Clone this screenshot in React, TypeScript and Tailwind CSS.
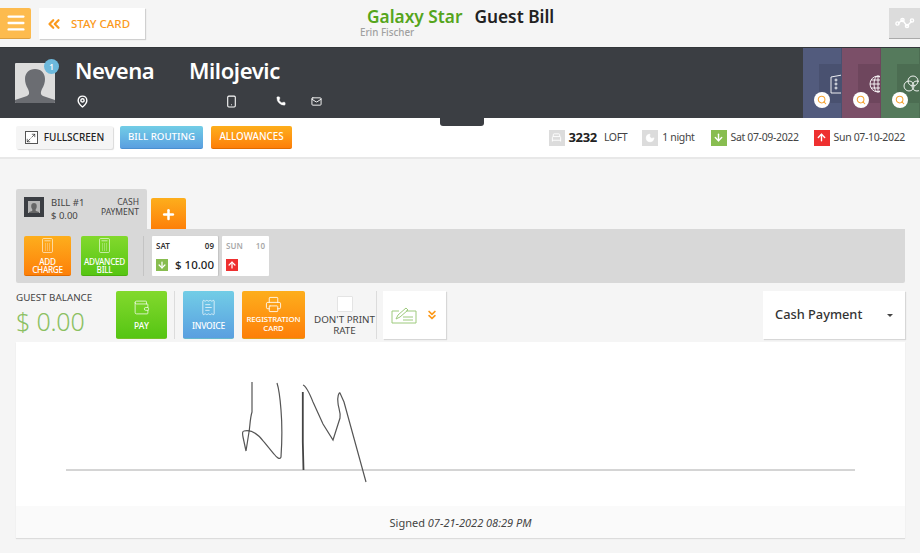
import React from "react";
import { Menu, ChevronsLeft, ChevronsDown, Search, MapPin, Smartphone, Phone, Mail, Plus, ArrowDown, ArrowUp, Moon, BedSingle, Wallet, ReceiptText, Printer, Maximize2 } from "lucide-react";

const font = { fontFamily: '"Noto Sans", sans-serif' };

function Calc() {
  return (
    <svg width="11" height="15" viewBox="0 0 11 15" fill="none" stroke="white" strokeOpacity="0.65" strokeWidth="0.9" className="mb-[5px]">
      <rect x="0.5" y="0.5" width="10" height="14" rx="1.2" />
      <path d="M2.500 2.800h6" />
      <path d="M3 6h1M5 6h1M7 6h1M3 8h1M5 8h1M7 8h1M3 10h1M5 10h1M7 10h1M3 12h1M5 12h1M7 12h1" />
    </svg>
  );
}

function Tile({ bg, border, children }: { bg: string; border?: string; children: React.ReactNode }) {
  return <div className={`flex w-[47px] h-[40px] flex-col items-center justify-end rounded-[2px] text-white text-[8.2px] leading-[7.5px] tracking-[-0.3px] font-medium text-center pb-[2px] border-b ${bg} ${border ?? ""}`}>{children}</div>;
}

function Action({ w, bg, children }: { w: string; bg: string; children: React.ReactNode }) {
  return <div className={`flex ${w} h-[48px] flex-col items-center justify-center gap-[2px] rounded-[2px] text-white text-[8.5px] leading-[9px] font-medium text-center border-b border-black/10 ${bg}`}>{children}</div>;
}

function Side({ bg, pl, children }: { bg: string; pl: string; children: React.ReactNode }) {
  return (
    <div className={`relative w-[39px] shrink-0 overflow-hidden border-r border-black/10 ${bg}`}>
      <div className={`absolute left-[16px] top-[16px] w-[40px] h-[39px] bg-black/10 flex items-center ${pl}`}>{children}</div>
      <div className="absolute left-[11px] top-[44px] w-[16px] h-[16px] rounded-full bg-white flex items-center justify-center">
        <Search size={10} strokeWidth={2.5} className="text-[#f6a332]" />
      </div>
    </div>
  );
}

function Stat({ bg, children }: { bg: string; children: React.ReactNode }) {
  return <span className={`flex w-[16px] h-[16px] items-center justify-center text-white ${bg}`}>{children}</span>;
}

export default function App() {
  return (
    <div style={font} className="w-[920px] h-[553px] overflow-hidden bg-[#f5f5f5] text-[#333] flex flex-col">
      <header className="relative h-[47px] shrink-0 flex items-start pt-[8px]">
        <button className="flex w-[31px] h-[31px] items-center justify-center rounded-r-[2px] bg-[#fdbb4e] border-b border-[#dda040] text-white">
          <Menu size={22} strokeWidth={2.6} />
        </button>
        <div className="ml-[8px] flex w-[106px] h-[31px] items-center gap-[8px] bg-white pl-[6px] shadow-[1px_1px_1px_rgba(0,0,0,0.15)] text-[#fb9a1c] text-[11.5px] font-medium">
          <ChevronsLeft size={18} strokeWidth={3} />
          <span>STAY CARD</span>
        </div>
        <div className="absolute left-[360px] top-[6px] w-[220px]">
          <div className="flex pl-[7px] text-[17.300px] leading-[22px] font-semibold">
            <span className="text-[#55a51c]">Galaxy Star</span>
            <span className="ml-[12px] text-[#222]">Guest Bill</span>
          </div>
          <div className="text-[9.8px] leading-[10px] font-medium text-[#a0a0a0]">Erin Fischer</div>
        </div>
        <div className="ml-auto flex w-[31px] h-[31px] items-center justify-center bg-[#dcdcdc] border-b border-[#aaa] text-white">
          <svg width="20" height="12" viewBox="0 0 20 12" fill="none" stroke="currentColor" strokeWidth="1.4">
            <path d="M3 6.500 7.500 3 12 9 17 4" />
            <circle cx="2.500" cy="6.500" r="1.600" /><circle cx="7.500" cy="3" r="1.600" /><circle cx="12" cy="9" r="1.600" /><circle cx="17" cy="3.500" r="1.600" />
          </svg>
        </div>
      </header>

      <section className="relative h-[71px] shrink-0 flex bg-[#3b3e43] text-white border-t border-[#33363a]">
        <div className="relative ml-[15px] mt-[15px] w-[40px] h-[40px] bg-[#dcdcdc] overflow-hidden rounded-[1px] flex items-end justify-center">
          <svg width="40" height="36" viewBox="0 0 40 36" fill="#6b6d72">
            <path d="M0 36v-3l12-4c2-1 3-3 1-7-2-3-3-7-3-10 0-6 4-10 10-10s10 4 10 10c0 3-1 7-3 10-2 4-1 6 1 7l12 4v3z" />
          </svg>
        </div>
        <span className="absolute left-[44px] top-[11px] flex w-[15px] h-[15px] items-center justify-center rounded-full bg-[#6db9dc] text-[8px] font-semibold">1</span>
        <div className="ml-[20px] flex-1">
          <div className="flex mt-[7px] text-[22px] leading-[30px] font-semibold tracking-[-0.4px]">
            <span className="w-[114px]">Nevena</span>
            <span>Milojevic</span>
          </div>
          <div className="relative mt-[9px] flex items-center h-[14px] text-white">
            <MapPin size={13} strokeWidth={2.6} className="ml-[1px]" />
            <Smartphone size={13} strokeWidth={2} className="ml-[136px]" />
            <Phone size={10} fill="currentColor" strokeWidth={1} className="ml-[38px]" />
            <Mail size={11} strokeWidth={2} className="ml-[25px]" />
          </div>
        </div>
        <div className="flex">
          <Side bg="bg-[#525b7d]" pl="pl-[11px]">
            <svg width="13" height="20" viewBox="0 0 13 20" fill="none" stroke="white" strokeWidth="0.9" className="shrink-0"><path d="M1 3l11-2v18H1z" /><circle cx="6" cy="6" r="1" /><circle cx="6" cy="10" r="1" /><circle cx="6" cy="14" r="1" /></svg>
          </Side>
          <Side bg="bg-[#7b4f68]" pl="pl-[11px]">
            <svg width="18" height="18" viewBox="0 0 18 18" fill="none" stroke="white" strokeWidth="0.9" className="shrink-0"><circle cx="9" cy="9" r="8" /><ellipse cx="9" cy="9" rx="4" ry="8" /><path d="M1 9h16M2 5h14M2 13h14M9 1v16" /></svg>
          </Side>
          <Side bg="bg-[#557a5c]" pl="pl-[6px]">
            <svg width="20" height="18" viewBox="0 0 20 18" fill="none" stroke="white" strokeWidth="0.9" className="shrink-0"><circle cx="10" cy="6" r="5" /><circle cx="6" cy="11" r="5" /><circle cx="14" cy="11" r="5" /></svg>
          </Side>
        </div>
        <div className="absolute left-[440px] top-[70px] w-[44px] h-[8px] bg-[#3b3e43] rounded-b-[3px] z-10" />
      </section>

      <section className="h-[41px] shrink-0 flex items-center bg-white border-b-2 border-[#e8e8e8] pl-[16px] pr-[15px]">
        <div className="flex w-[97px] h-[23px] items-center justify-center gap-[6px] bg-[#f5f5f5] rounded-[2px] shadow-[1px_1px_1px_rgba(0,0,0,0.15)] text-[#222] text-[10px] font-medium">
          <span className="flex w-[13px] h-[13px] items-center justify-center border border-[#555] bg-white"><Maximize2 size={10} strokeWidth={1.6} /></span>
          FULLSCREEN
        </div>
        <div className="ml-[7px] flex w-[83px] h-[23px] items-center justify-center rounded-[2px] bg-gradient-to-b from-[#72cde6] to-[#5a9fe0] border-b border-[#4a8fd0] pt-[1px] text-white text-[9.700px] font-medium">BILL ROUTING</div>
        <div className="ml-[8px] flex w-[81px] h-[23px] items-center justify-center rounded-[2px] bg-gradient-to-b from-[#fdae1c] to-[#fd7f08] border-b border-[#e06c00] pt-[1px] text-white text-[9.800px] font-medium">ALLOWANCES</div>
        <div className="ml-auto flex items-center text-[10.5px] tracking-[-0.35px] text-[#444]">
          <Stat bg="bg-[#dcdcdc]"><BedSingle size={11} /></Stat>
          <span className="ml-[4px] text-[13px] font-bold text-[#222]">3232</span>
          <span className="ml-[7px]">LOFT</span>
          <span className="ml-[15px]"><Stat bg="bg-[#dcdcdc]"><Moon size={10} fill="currentColor" /></Stat></span>
          <span className="ml-[4px]">1 night</span>
          <span className="ml-[16px]"><Stat bg="bg-[#88bd50]"><ArrowDown size={11} strokeWidth={3} /></Stat></span>
          <span className="ml-[4px]">Sat 07-09-2022</span>
          <span className="ml-[15px]"><Stat bg="bg-[#ee3030]"><ArrowUp size={11} strokeWidth={3} /></Stat></span>
          <span className="ml-[4px]">Sun 07-10-2022</span>
        </div>
      </section>

      <main className="flex-1 px-[16px] pr-[15px] pt-[30px]">
        <div className="flex items-end h-[40px]">
          <div className="flex w-[131px] h-[40px] bg-[#d8d8d8] rounded-t-[2px] pt-[8px] pl-[8px] text-[9.5px] leading-[12.500px] text-[#444]">
            <span className="flex w-[20px] h-[20px] items-center justify-center bg-[#3b3e43]">
              <svg width="12" height="12" viewBox="0 0 12 12" fill="#666"><rect width="12" height="12" fill="#b5b5b5" /><path d="M1 12v-1l3-1c1-1 0-2-.5-3C3 5 3 2 6 2s3 3 2.500 5c-.5 1-1.500 2-.5 3l3 1v1z" /></svg>
            </span>
            <div className="ml-[7px] w-[46px]"><div>BILL #1</div><div>$ 0.00</div></div>
            <div className="w-[42px] text-right leading-[10px] text-[8.500px]">CASH<br />PAYMENT</div>
          </div>
          <div className="ml-[4px] flex w-[35px] h-[31px] items-center justify-center rounded-t-[2px] bg-gradient-to-b from-[#fdae1c] to-[#fd7f08] pt-[2px] text-white">
            <Plus size={15} strokeWidth={4} />
          </div>
        </div>

        <div className="flex h-[54px] items-start bg-[#d8d8d8] pt-[7px] pl-[8px] rounded-b-[2px]">
          <Tile bg="bg-gradient-to-b from-[#fdae1c] to-[#fd7f08]" border="border-[#e06c00]">
            <Calc />
            ADD<br />CHARGE
          </Tile>
          <div className="ml-[10px]">
            <Tile bg="bg-gradient-to-b from-[#82d92c] to-[#55c512]" border="border-[#4bae0e]">
              <Calc />
              ADVANCED<br />BILL
            </Tile>
          </div>
          <div className="ml-[15px] w-px h-[40px] bg-[#c4c4c4]" />
          <div className="ml-[8px] w-[66px] h-[40px] bg-white rounded-[1px] px-[4px] pt-[5px] shadow-[1px_0_1px_rgba(0,0,0,0.1)]">
            <div className="flex justify-between text-[8px] leading-[10px] font-semibold text-[#333]"><span>SAT</span><span>09</span></div>
            <div className="mt-[8px] flex items-center justify-between text-[11.5px] leading-[12px] font-medium text-[#222]">
              <Stat bg="bg-[#88bd50] !w-[12px] !h-[12px]"><ArrowDown size={10} strokeWidth={3} /></Stat>
              <span>$ 10.00</span>
            </div>
          </div>
          <div className="ml-[4px] w-[47px] h-[40px] bg-white rounded-[1px] px-[4px] pt-[5px]">
            <div className="flex justify-between text-[8px] leading-[10px] font-semibold text-[#a8a8a8]"><span>SUN</span><span>10</span></div>
            <div className="mt-[8px]"><Stat bg="bg-[#ee3030] !w-[12px] !h-[12px]"><ArrowUp size={10} strokeWidth={3} /></Stat></div>
          </div>
        </div>

        <div className="mt-[8px] flex items-start h-[48px]">
          <div className="w-[100px]">
            <div className="text-[9.800px] leading-[13px] text-[#444]">GUEST BALANCE</div>
            <div className="mt-[1px] text-[25px] leading-[32px] font-light tracking-[-0.2px] text-[#8bc062]">$ 0.00</div>
          </div>
          <Action w="w-[51px]" bg="bg-gradient-to-b from-[#82d92c] to-[#55c512]">
            <Wallet size={17} strokeWidth={1} />
            <span className="mt-[3px]">PAY</span>
          </Action>
          <div className="ml-[7px] w-px h-[48px] bg-[#dcdcdc]" />
          <div className="ml-[8px]">
            <Action w="w-[51px]" bg="bg-gradient-to-b from-[#72cde6] to-[#5a9fe0]">
              <ReceiptText size={17} strokeWidth={1} />
              <span className="mt-[3px] tracking-[-0.2px]">INVOICE</span>
            </Action>
          </div>
          <div className="ml-[8px]">
            <Action w="w-[63px]" bg="bg-gradient-to-b from-[#fdae1c] to-[#fd7f08]">
              <Printer size={17} strokeWidth={1.2} />
              <span className="text-[7.800px] tracking-[-0.1px]">REGISTRATION<br />CARD</span>
            </Action>
          </div>
          <div className="ml-[8px] w-[63px] flex flex-col items-center text-[9.800px] leading-[11px] text-[#444] text-center">
            <span className="mt-[5px] w-[16px] h-[16px] bg-white border border-[#e4e4e4] rounded-[1px]" />
            <span className="mt-[2px]">DON'T PRINT<br />RATE</span>
          </div>
          <div className="w-px h-[48px] bg-[#dcdcdc]" />
          <div className="ml-[6px] flex w-[63px] h-[48px] items-center justify-center gap-[8px] bg-white shadow-[1px_1px_1px_rgba(0,0,0,0.12)]">
            <svg width="26" height="18" viewBox="0 0 26 18" fill="none" stroke="#9dca7c" strokeWidth="1">
              <path d="M8 5H1v12h24V5H15" /><path d="M5 13 7 9l8-7 2 2-8 7zM12 11h10M12 14h10" />
            </svg>
            <ChevronsDown size={14} strokeWidth={3} className="text-[#fb9a1c]" />
          </div>
          <div className="ml-auto flex w-[142px] h-[48px] items-center justify-between bg-white px-[12px] text-[12.800px] font-medium text-[#333] shadow-[1px_1px_1px_rgba(0,0,0,0.12)]">
            Cash Payment
            <span className="w-0 h-0 border-x-[3px] border-x-transparent border-t-[3px] border-t-[#444]" />
          </div>
        </div>

        <div className="mt-[3px] h-[196px] bg-white flex flex-col shadow-[0_1px_1px_rgba(0,0,0,0.1)]">
          <div className="h-[164px] px-[50px]">
            <svg width="789" height="164" viewBox="0 0 789 164" fill="none" className="block">
              <path d="M0 128H789" stroke="#aaa" strokeWidth="1" />
              <path d="M186 40V70C184 76 184 85 183 90L180 109 177 95C176 90 177 89 178 89 186 87 192 92 198 100L208 112C211 116 214 118 215 115 216 100 216 80 215 68 214 55 213 47 211 41" stroke="#555" strokeWidth="1.200" />
              <path d="M236.800 50V100L237.500 128" stroke="#444" strokeWidth="1.800" />
              <path d="M237 43C240 44 243 50 247 60L257 82 267 98 274 76C275 70 272 65 272 61 271 55 273 50 274 51L278 60 300 140" stroke="#555" strokeWidth="1.200" />
            </svg>
          </div>
          <div className="h-[32px] flex items-center justify-center bg-[#fafafa] pt-[3px] text-[11px] text-[#444]">
            Signed&nbsp;<em>07-21-2022 08:29 PM</em>
          </div>
        </div>
      </main>
    </div>
  );
}
